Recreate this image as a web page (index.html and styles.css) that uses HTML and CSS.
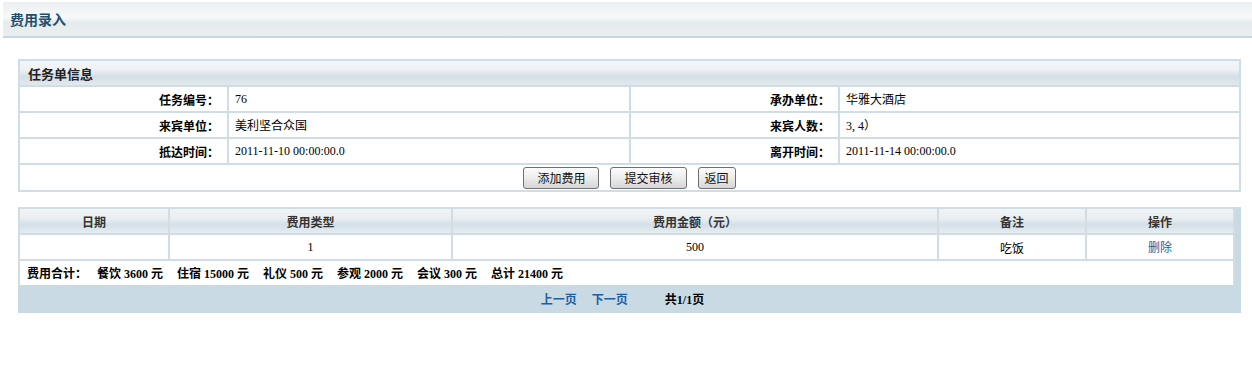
FILE: index.html
```html
<!DOCTYPE html>
<html lang="zh-CN">
<head>
    <meta charset="utf-8">
    <title>费用录入</title>
    <link rel="stylesheet" href="styles.css">
</head>
<body>
    <div class="title-bar">费用录入</div>

    <div class="panel">
        <table class="info">
            <colgroup>
                <col class="w-label">
                <col class="w-value">
                <col class="w-label">
                <col>
            </colgroup>
            <tr>
                <td class="panel-head" colspan="4">任务单信息</td>
            </tr>
            <tr>
                <td class="label">任务编号：</td>
                <td class="value">76</td>
                <td class="label">承办单位：</td>
                <td class="value">华雅大酒店</td>
            </tr>
            <tr>
                <td class="label">来宾单位：</td>
                <td class="value">美利坚合众国</td>
                <td class="label">来宾人数：</td>
                <td class="value">3, 4）</td>
            </tr>
            <tr>
                <td class="label">抵达时间：</td>
                <td class="value">2011-11-10 00:00:00.0</td>
                <td class="label">离开时间：</td>
                <td class="value">2011-11-14 00:00:00.0</td>
            </tr>
            <tr>
                <td class="actions" colspan="4">
                    <button class="btn">添加费用</button>
                    <button class="btn">提交审核</button>
                    <button class="btn btn-short">返回</button>
                </td>
            </tr>
        </table>
    </div>

    <div class="list">
        <table class="grid">
            <colgroup>
                <col class="c-date">
                <col class="c-type">
                <col class="c-money">
                <col class="c-note">
                <col>
            </colgroup>
            <tr>
                <th>日期</th>
                <th>费用类型</th>
                <th>费用金额（元）</th>
                <th>备注</th>
                <th>操作</th>
            </tr>
            <tr>
                <td></td>
                <td>1</td>
                <td>500</td>
                <td class="cjk">吃饭</td>
                <td><a href="#" class="link">删除</a></td>
            </tr>
            <tr>
                <td class="total" colspan="5">费用合计：<span class="gap"></span>餐饮 3600 元<span class="sp"></span>住宿 15000 元<span class="sp"></span>礼仪 500 元<span class="sp"></span>参观 2000 元<span class="sp"></span>会议 300 元<span class="sp"></span>总计 21400 元</td>
            </tr>
        </table>
        <div class="pager">
            <a href="#" class="link page-link">上一页</a>
            <a href="#" class="link page-link">下一页</a>
            <span class="page-count">共1/1页</span>
        </div>
    </div>
</body>
</html>
```

FILE: styles.css
```css
body {
    margin: 0;
    font-family: "Liberation Serif", "Noto Sans CJK SC", serif;
    font-size: 12px;
    color: #000;
    background: #fff;
}
.title-bar {
    margin: 2px 0 0 3px;
    height: 34px;
    line-height: 34px;
    padding-left: 7px;
    font-family: "Noto Sans CJK SC", sans-serif;
    font-size: 14px;
    font-weight: bold;
    color: #234f6d;
    background: linear-gradient(#edf0f2, #f6f8f9 45%, #e6ebee 60%, #e9eef1);
    border-bottom: 2px solid #c6d6df;
}
.panel {
    margin: 21px 11px 0 18px;
}
.info {
    width: 100%;
    border-collapse: collapse;
    table-layout: fixed;
}
.w-label { width: 209px; }
.w-value { width: 402px; }
.info td {
    border: 2px solid #d0dde5;
    height: 24px;
    padding: 0 6px;
}
.info .panel-head {
    padding-left: 8px;
    font-family: "Noto Sans CJK SC", sans-serif;
    font-size: 13px;
    font-weight: bold;
    color: #222;
    background: linear-gradient(#f3f6f8, #eef2f5 35%, #d3dfe6 65%, #e2e9ee);
}
.info .label {
    text-align: right;
    padding-right: 8px;
    font-family: "Noto Sans CJK SC", sans-serif;
    font-weight: bold;
}
.info .value {
    padding-left: 6px;
}
.info .actions {
    height: 25px;
    text-align: center;
    padding: 0;
}
.btn {
    font-family: "Noto Sans CJK SC", sans-serif;
    font-size: 12px;
    height: 22px;
    padding: 0 13px;
    margin: 0 4px;
    border: 1px solid #6f6f6f;
    border-radius: 3px;
    color: #111;
    background: linear-gradient(#fdfdfd, #ececec 50%, #d6d6d6);
    vertical-align: middle;
}
.btn-short {
    padding: 0 6px;
}
.list {
    margin: 15px 11px 0 18px;
    background: #c9dae4;
}
.grid {
    width: calc(100% - 6px);
    border-collapse: collapse;
    table-layout: fixed;
    background: #fff;
}
.grid th,
.grid td {
    border: 2px solid #d0dde5;
    height: 24px;
    text-align: center;
    padding: 0;
}
.grid th {
    font-family: "Noto Sans CJK SC", sans-serif;
    font-weight: bold;
    color: #333;
    background: linear-gradient(#f1f4f6, #e8eef1 40%, #d4e0e7 65%, #e5ecf0);
}
.grid .cjk {
    font-family: "Noto Sans CJK SC", sans-serif;
}
.c-date { width: 150px; }
.c-type { width: 283px; }
.c-money { width: 486px; }
.c-note { width: 148px; }
.grid .total {
    text-align: left;
    padding-left: 7px;
    font-weight: bold;
    border-bottom: none;
}
.gap {
    display: inline-block;
    width: 10px;
}
.sp {
    display: inline-block;
    width: 14px;
}
.link {
    color: #1c5fa6;
    text-decoration: none;
    font-family: "Noto Sans CJK SC", sans-serif;
}
.pager {
    height: 28px;
    line-height: 28px;
    text-align: center;
    font-weight: bold;
    padding-right: 14px;
}
.page-link {
    margin-right: 12px;
}
.page-count {
    margin-left: 22px;
    font-family: "Liberation Serif", "Noto Sans CJK SC", serif;
}
```
